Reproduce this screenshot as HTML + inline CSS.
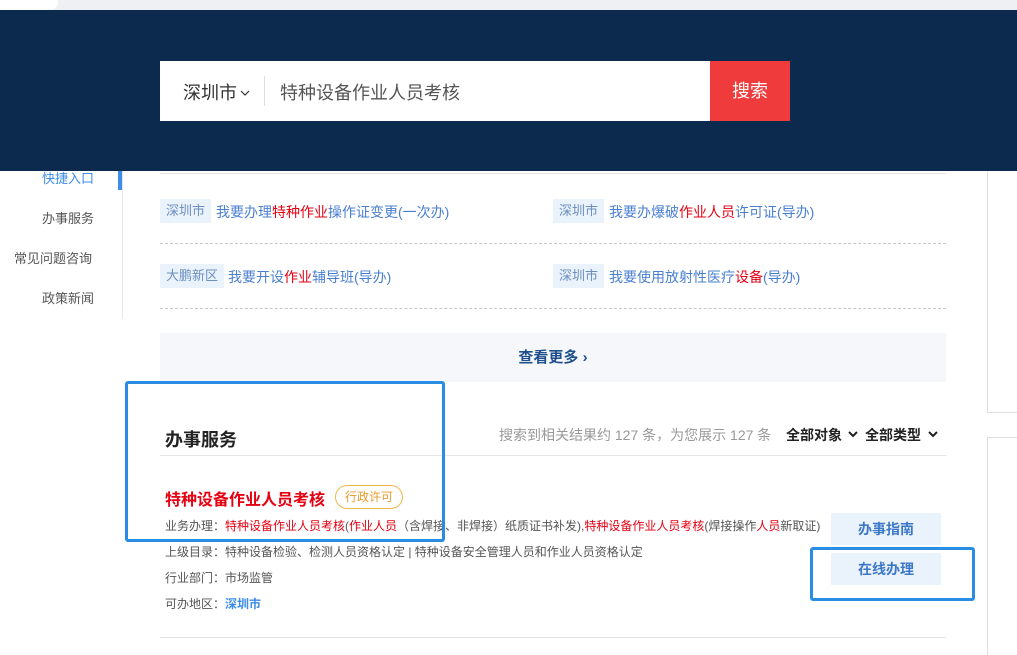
<!DOCTYPE html>
<html><head><meta charset="utf-8"><style>
*{margin:0;padding:0;box-sizing:border-box}
body{width:1017px;height:655px;overflow:hidden;background:#fff;font-family:"Liberation Sans","Noto Sans CJK SC",sans-serif;position:relative}
.a{position:absolute;white-space:nowrap}
.r{color:#e60012}
.tag{position:absolute;height:24px;background:#eaf2fb;color:#6b8fbf;font-size:13px;line-height:24px;padding:0 6px}
.lk{color:#4a7fd0;font-size:14px}
.dash{position:absolute;left:160px;width:786px;border-top:1px dashed #c8c8c8}
.info{font-size:12px;color:#555}
.btn{position:absolute;left:831px;width:110px;height:32px;background:#eaf2fb;color:#3c78c8;font-weight:bold;font-size:14px;text-align:center;line-height:32px}
</style></head><body>
<div class="a" style="left:0;top:0;width:1017px;height:10px;background:#eef0f4"></div>
<div class="a" style="left:0;top:0;width:58px;height:10px;background:#fff;border-bottom-right-radius:8px"></div>
<div class="a" style="left:0;top:10px;width:1017px;height:161px;background:#0b2a4e"></div>
<div class="a" style="left:160px;top:61px;width:550px;height:60px;background:#fff"></div>
<div class="a" style="left:183px;top:79px;font-size:18px;color:#333">深圳市</div>
<svg class="a" style="left:240px;top:90px" width="10" height="6" viewBox="0 0 10 6"><path d="M1 1l4 4 4-4" fill="none" stroke="#333" stroke-width="1.2"/></svg>
<div class="a" style="left:264px;top:76px;width:1px;height:30px;background:#ddd"></div>
<div class="a" style="left:280px;top:79px;font-size:18px;color:#555">特种设备作业人员考核</div>
<div class="a" style="left:710px;top:61px;width:80px;height:60px;background:#ef3b3b;color:#fff;font-size:18px;text-align:center;line-height:60px">搜索</div>

<div class="a" style="left:122px;top:171px;width:1px;height:148px;background:#e5e5e5"></div>
<div class="a" style="left:118px;top:171px;width:4px;height:19px;background:#3c8ce8"></div>
<div class="a" style="left:42px;top:168px;font-size:13px;color:#3c8ce8">快捷入口</div>
<div class="a" style="left:42px;top:208px;font-size:13px;color:#555">办事服务</div>
<div class="a" style="left:14px;top:248px;font-size:13px;color:#555">常见问题咨询</div>
<div class="a" style="left:42px;top:288px;font-size:13px;color:#555">政策新闻</div>
<div class="a" style="left:160px;top:173px;width:786px;height:1px;background:#e5e5e5"></div>

<div class="tag" style="left:160px;top:199px">深圳市</div>
<div class="a lk" style="left:216px;top:202px">我要办理<span class="r">特种作业</span>操作证变更(一次办)</div>
<div class="tag" style="left:553px;top:199px">深圳市</div>
<div class="a lk" style="left:609px;top:202px">我要办爆破<span class="r">作业人员</span>许可证(导办)</div>
<div class="dash" style="top:243px"></div>
<div class="tag" style="left:160px;top:264px">大鹏新区</div>
<div class="a lk" style="left:228px;top:267px">我要开设<span class="r">作业</span>辅导班(导办)</div>
<div class="tag" style="left:553px;top:264px">深圳市</div>
<div class="a lk" style="left:609px;top:267px">我要使用放射性医疗<span class="r">设备</span>(导办)</div>
<div class="dash" style="top:308px"></div>
<div class="a" style="left:160px;top:333px;width:786px;height:49px;background:#f5f7fa;text-align:center;line-height:49px;font-size:15px;font-weight:bold;color:#1e4f8c">查看更多 ›</div>

<div class="a" style="left:987px;top:171px;width:1px;height:241px;background:#ddd"></div>
<div class="a" style="left:987px;top:412px;width:30px;height:1px;background:#ddd"></div>
<div class="a" style="left:987px;top:437px;width:30px;height:1px;background:#ddd"></div>
<div class="a" style="left:987px;top:437px;width:1px;height:218px;background:#ddd"></div>

<div class="a" style="left:165px;top:426px;font-size:18px;font-weight:bold;color:#222">办事服务</div>
<div class="a" style="left:499px;top:425px;font-size:14px;color:#999">搜索到相关结果约 127 条，为您展示 127 条</div>
<div class="a" style="left:786px;top:425px;font-size:14px;font-weight:bold;color:#222">全部对象</div>
<svg class="a" style="left:848px;top:431px" width="10" height="7" viewBox="0 0 10 7"><path d="M1 1l4 4 4-4" fill="none" stroke="#222" stroke-width="2"/></svg>
<div class="a" style="left:865px;top:425px;font-size:14px;font-weight:bold;color:#222">全部类型</div>
<svg class="a" style="left:928px;top:431px" width="10" height="7" viewBox="0 0 10 7"><path d="M1 1l4 4 4-4" fill="none" stroke="#222" stroke-width="2"/></svg>
<div class="a" style="left:160px;top:455px;width:786px;height:1px;background:#e5e5e5"></div>

<div class="a r" style="left:165px;top:486px;font-size:16px;font-weight:bold">特种设备作业人员考核</div>
<div class="a" style="left:335px;top:485px;height:24px;padding:0 9px;border:1px solid #f0b84a;border-radius:12px;color:#e89a2a;font-size:12px;line-height:22px">行政许可</div>
<div class="a info" style="left:165px;top:517px">业务办理：<span class="r">特种设备作业人员考核</span>(<span class="r">作业人员</span>（含焊接、非焊接）纸质证书补发),<span class="r">特种设备作业人员考核</span>(焊接操作<span class="r">人员</span>新取证)</div>
<div class="a info" style="left:165px;top:543px">上级目录：特种设备检验、检测人员资格认定 | 特种设备安全管理人员和作业人员资格认定</div>
<div class="a info" style="left:165px;top:569px">行业部门：市场监管</div>
<div class="a info" style="left:165px;top:595px">可办地区：<span style="color:#3c8ce8;font-weight:bold">深圳市</span></div>
<div class="btn" style="top:513px">办事指南</div>
<div class="btn" style="top:553px">在线办理</div>
<div class="a" style="left:160px;top:637px;width:786px;height:1px;background:#e5e5e5"></div>

<div class="a" style="left:125px;top:381px;width:320px;height:161px;border:3px solid #2a8de4;border-radius:3px"></div>
<div class="a" style="left:810px;top:547px;width:165px;height:54px;border:3px solid #2a8de4;border-radius:3px"></div>
</body></html>
